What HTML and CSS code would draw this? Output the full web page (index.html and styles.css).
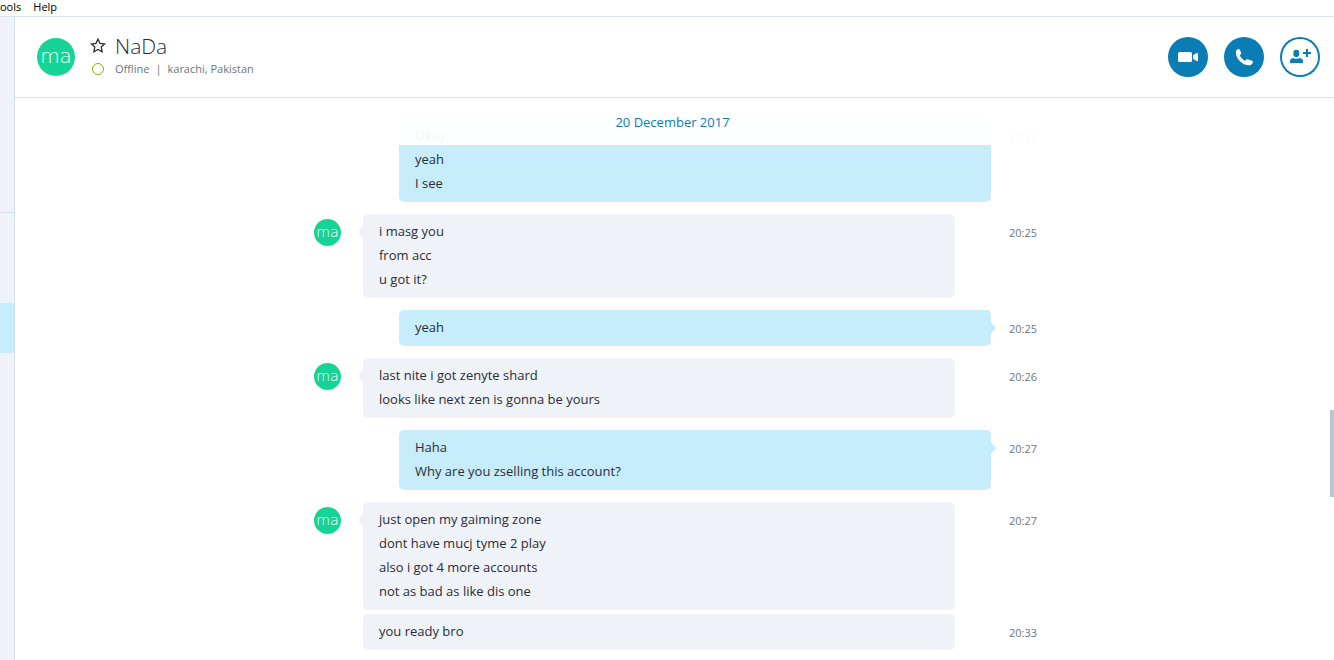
FILE: index.html
```html
<!DOCTYPE html>
<html lang="en">
<head>
    <meta charset="UTF-8">
    <meta name="viewport" content="width=device-width, initial-scale=1.0">
    <title>NaDa</title>
    <link rel="stylesheet" href="styles.css">
</head>
<body>
    <nav class="menubar">
        <button type="button" aria-label="Tools">ools</button>
        <button type="button">Help</button>
    </nav>
    <div class="app">
        <aside class="sidebar">
            <div class="sidebar-top"></div>
            <div class="contact-selected"></div>
        </aside>
        <main class="conversation">
            <header class="chat-header">
                <svg class="avatar-large" viewBox="0 0 38 38">
                    <circle cx="19" cy="19" r="19"/>
                    <text x="19" y="25" text-anchor="middle">ma</text>
                </svg>
                <div class="contact">
                    <button type="button" class="star" aria-label="Favourite">
                        <svg width="16" height="16" viewBox="0 0 16 16">
                            <path d="M8 1.2l2 4.2 4.6.6-3.4 3.1.9 4.6L8 11.4l-4.1 2.3.9-4.6L1.4 6l4.6-.6z"/>
                        </svg>
                    </button>
                    <h1>NaDa</h1>
                    <span class="status-dot"></span>
                    <p class="status"><span>Offline</span><span>|</span><span>karachi, Pakistan</span></p>
                </div>
                <div class="actions">
                    <button type="button" class="action" aria-label="Video call">
                        <svg width="40" height="40" viewBox="0 0 40 40">
                            <rect x="10" y="15" width="14" height="10" rx="1.6"/>
                            <path d="M25 18.2l3.6-2.1c.7-.4 1.4-.1 1.4.7v6.4c0 .8-.7 1.1-1.4.7L25 21.8z"/>
                        </svg>
                    </button>
                    <button type="button" class="action" aria-label="Call">
                        <svg width="40" height="40" viewBox="0 0 40 40">
                            <path d="M12.3 13.6c.4-.9 1.4-1.6 2.5-1.6.4 0 .7.2.9.6l1.5 3.3c.2.4.1.9-.2 1.2l-1.2 1.4c.9 2.2 3 4.3 5.2 5.2l1.4-1.2c.4-.3.8-.4 1.2-.2l4.6 1.5c.5.2.8.6.7 1.1-.3 1.6-1.6 3.1-3.6 3.3-6.6.3-13.4-6.4-13.4-12.5 0-.8.1-1.5.4-2.1z"/>
                        </svg>
                    </button>
                    <button type="button" class="action outline" aria-label="Add people">
                        <svg width="40" height="40" viewBox="0 0 40 40">
                            <rect x="13.4" y="12.8" width="5.8" height="7.2" rx="2.7"/>
                            <path d="M10 26v-2.1c0-1.5 1-2.6 3.4-3 1.6 1.2 4.2 1.2 5.8 0 2.6.4 3.8 1.5 3.8 3V26z"/>
                            <path d="M26 12h2v3h3v2h-3v3h-2v-3h-3v-2h3z"/>
                        </svg>
                    </button>
                </div>
            </header>
            <section class="chat">
                <div class="date">20 December 2017</div>
                <div class="messages">
                    <div class="row">
                        <div class="bubble"></div>
                    </div>
                    <div class="row own">
                        <div class="bubble tail">
                            <p>Okay</p>
                            <p>yeah</p>
                            <p>I see</p>
                        </div>
                        <time>20:25</time>
                    </div>
                    <div class="row">
                        <svg class="avatar" viewBox="0 0 38 38">
                            <circle cx="19" cy="19" r="19"/>
                            <text x="19" y="25" text-anchor="middle">ma</text>
                        </svg>
                        <div class="bubble tail">
                            <p>i masg you</p>
                            <p>from acc</p>
                            <p>u got it?</p>
                        </div>
                        <time>20:25</time>
                    </div>
                    <div class="row own">
                        <div class="bubble tail">
                            <p>yeah</p>
                        </div>
                        <time>20:25</time>
                    </div>
                    <div class="row">
                        <svg class="avatar" viewBox="0 0 38 38">
                            <circle cx="19" cy="19" r="19"/>
                            <text x="19" y="25" text-anchor="middle">ma</text>
                        </svg>
                        <div class="bubble tail">
                            <p>last nite i got zenyte shard</p>
                            <p>looks like next zen is gonna be yours</p>
                        </div>
                        <time>20:26</time>
                    </div>
                    <div class="row own">
                        <div class="bubble tail">
                            <p>Haha</p>
                            <p>Why are you zselling this account?</p>
                        </div>
                        <time>20:27</time>
                    </div>
                    <div class="row">
                        <svg class="avatar" viewBox="0 0 38 38">
                            <circle cx="19" cy="19" r="19"/>
                            <text x="19" y="25" text-anchor="middle">ma</text>
                        </svg>
                        <div class="bubble tail">
                            <p>just open my gaiming zone</p>
                            <p>dont have mucj tyme 2 play</p>
                            <p>also i got 4 more accounts</p>
                            <p>not as bad as like dis one</p>
                        </div>
                        <time>20:27</time>
                    </div>
                    <div class="row follow">
                        <div class="bubble">
                            <p>you ready bro</p>
                        </div>
                        <time>20:33</time>
                    </div>
                </div>
                <div class="scroll-thumb"></div>
            </section>
        </main>
    </div>
</body>
</html>
```
FILE: styles.css
```css
* {
    box-sizing: border-box;
}

body {
    margin: 0;
    height: 100vh;
    display: flex;
    flex-direction: column;
    overflow: hidden;
    background: #fff;
    color: #2b2c33;
    font-family: "Open Sans", "Noto Sans", sans-serif;
    font-size: 13px;
}

h1, p {
    margin: 0;
}

button {
    padding: 0;
    border: none;
    background: none;
    font: inherit;
    color: inherit;
    cursor: pointer;
}

/* menu bar */
.menubar {
    display: flex;
    gap: 12px;
    height: 17px;
    padding-bottom: 2px;
    border-bottom: 1px solid #d6e3ee;
    font-size: 11px;
    line-height: 14px;
    color: #000;
}

.app {
    flex: 1;
    display: flex;
    min-height: 0;
}

.sidebar {
    width: 15px;
    background: #eff3f8;
    border-right: 1px solid #d1e1ee;
}

.sidebar-top {
    height: 196px;
    margin-bottom: 90px;
    border-bottom: 1px solid #d1e1ee;
}

.contact-selected {
    height: 50px;
    background: #c7ecfc;
}

.conversation {
    flex: 1;
    display: flex;
    flex-direction: column;
    min-width: 0;
}

/* header with the contact and call buttons */
.chat-header {
    display: flex;
    align-items: center;
    height: 81px;
    padding: 0 14px 0 22px;
    border-bottom: 1px solid #d6e3ee;
}

.avatar,
.avatar-large {
    fill: #15d496;
}

.avatar text,
.avatar-large text {
    fill: #fff;
    font-family: "DejaVu Sans", sans-serif;
    font-size: 20px;
    font-weight: 200;
}

.avatar-large {
    width: 38px;
    height: 38px;
}

.contact {
    flex: 1;
    display: grid;
    grid-template-columns: 16px 1fr;
    column-gap: 9px;
    align-items: center;
    margin-left: 15px;
}

.contact h1 {
    font-size: 21px;
    font-weight: 300;
    line-height: 24px;
}

.star {
    height: 16px;
}

.star svg {
    display: block;
    fill: none;
    stroke: #2b2c33;
    stroke-width: 1.3;
}

.status-dot {
    width: 12px;
    height: 12px;
    border: 1px solid #7fba00;
    border-radius: 50%;
    justify-self: center;
}

.status {
    display: flex;
    gap: 6px;
    font-size: 11px;
    line-height: 22px;
    color: #6b7689;
}

.actions {
    display: flex;
    gap: 16px;
}

.action {
    width: 40px;
    height: 40px;
    border-radius: 50%;
    background: #0a7db5;
}

.action svg {
    display: block;
    fill: #fff;
}

.action.outline {
    background: #fff;
    box-shadow: inset 0 0 0 2px #0a7db5;
}

.action.outline svg {
    fill: #0a7db5;
}

/* messages, pinned to the bottom */
.chat {
    position: relative;
    flex: 1;
    display: flex;
    flex-direction: column;
    justify-content: flex-end;
    overflow: hidden;
    padding-bottom: 10px;
}

.date {
    position: absolute;
    top: 0;
    left: 0;
    right: 0;
    z-index: 1;
    height: 47px;
    padding-right: 4px;
    background: rgba(255, 255, 255, 0.95);
    line-height: 48px;
    text-align: center;
    color: #0a7db5;
}

.messages {
    width: 100%;
    max-width: 723px;
    margin: 0 auto;
}

.row {
    display: grid;
    grid-template-columns: 28px 22px 36px 1fr 36px 18px 27px;
    margin-top: 12px;
}

.row.follow {
    margin-top: 4px;
}

.avatar {
    grid-column: 1;
    grid-row: 1;
    justify-self: end;
    width: 27px;
    height: 27px;
    margin-top: 5px;
}

.bubble {
    grid-column: 3 / 5;
    grid-row: 1;
    position: relative;
    min-height: 36px;
    padding: 5px 16px 7px;
    border-radius: 5px;
    background: #eff3f8;
    line-height: 24px;
}

.own .bubble {
    grid-column: 4 / 6;
    background: #c7ecfc;
}

/* small pointer on the side of the bubble */
.tail::before {
    content: "";
    position: absolute;
    top: 12px;
    left: -5px;
    width: 5px;
    height: 12px;
    background: inherit;
    clip-path: polygon(100% 0, 0 50%, 100% 100%);
}

.own .tail::before {
    left: auto;
    right: -5px;
    clip-path: polygon(0 0, 100% 50%, 0 100%);
}

time {
    grid-column: 7;
    grid-row: 1;
    padding-top: 7px;
    font-size: 11px;
    line-height: 24px;
    color: #6b7689;
    white-space: nowrap;
}

.scroll-thumb {
    position: absolute;
    top: 312px;
    right: 0;
    width: 4px;
    height: 87px;
    background: #b4c8d8;
}
```
